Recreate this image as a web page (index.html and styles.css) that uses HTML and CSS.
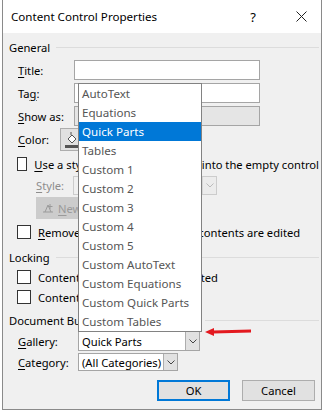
FILE: index.html
```html
<!DOCTYPE html>
<html lang="en">
<head>
    <meta charset="UTF-8">
    <meta name="viewport" content="width=device-width, initial-scale=1.0">
    <title>Content Control Properties</title>
    <link rel="stylesheet" href="styles.css">
</head>
<body>
    <div class="window">
        <div class="titlebar">
            <span class="title">Content Control Properties</span>
            <span class="help">?</span>
            <span class="close">
                <svg width="11" height="11" viewBox="0 0 11 11"><path d="M0.5 0.5 L10.5 10.5 M10.5 0.5 L0.5 10.5" stroke="#222" stroke-width="1" fill="none"/></svg>
            </span>
        </div>

        <div class="content">
            <div class="group-head">General</div>

            <div class="field-row mt-4">
                <label><u>T</u>itle:</label>
                <span class="textbox"></span>
            </div>
            <div class="field-row mt-3">
                <label>Ta<u>g</u>:</label>
                <span class="textbox"></span>
            </div>
            <div class="field-row mt-3">
                <label><u>S</u>how as:</label>
                <span class="combo show-combo"></span>
            </div>
            <div class="field-row color-row mt-2">
                <label><u>C</u>olor:</label>
                <span class="color-btn">
                    <svg width="16" height="18" viewBox="0 0 16 18">
                        <path d="M4 8 L8 4 L12 8 L8 12 Z" fill="#fff" stroke="#555" stroke-width="1"/>
                        <path d="M7 4 L7 1" stroke="#555" stroke-width="1"/>
                        <rect x="1" y="14" width="14" height="3" fill="#555"/>
                    </svg>
                </span>
            </div>

            <div class="check-row mt-5">
                <span class="checkbox"></span>
                <span><u>U</u>se a style to format text typed into the empty control</span>
            </div>
            <div class="field-row style-row mt-4">
                <label class="disabled"><u>S</u>tyle:</label>
                <span class="combo style-combo"><span class="arrow-btn disabled-arrow">
                    <svg width="8" height="5" viewBox="0 0 8 5"><path d="M0.5 0.5 L4 4 L7.5 0.5" stroke="#bbb" fill="none"/></svg>
                </span></span>
            </div>
            <div class="new-row mt-2">
                <span class="new-btn">
                    <svg width="12" height="10" viewBox="0 0 12 10"><path d="M1 9 L11 9 M3 9 L6 2 L9 9 M8 1 L8 6 M5.5 3.5 L10.5 3.5" stroke="#9a9a9a" fill="none"/></svg>
                    <span><u>N</u>ew Style...</span>
                </span>
            </div>
            <div class="check-row mt-5">
                <span class="checkbox"></span>
                <span><u>R</u>emove content control when contents are edited</span>
            </div>

            <div class="group-head mt-8">Locking</div>
            <div class="check-row mt-3">
                <span class="checkbox"></span>
                <span>Content control cannot be <u>d</u>eleted</span>
            </div>
            <div class="check-row mt-4">
                <span class="checkbox"></span>
                <span>Contents cannot be <u>e</u>dited</span>
            </div>

            <div class="group-head mt-6">Document Building Block Properties</div>
            <div class="field-row block-row mt-2">
                <label><u>G</u>allery:</label>
                <span class="combo gallery-combo">
                    <span class="combo-text">Quick Parts</span>
                    <span class="arrow-btn">
                        <svg width="8" height="5" viewBox="0 0 8 5"><path d="M0.5 0.5 L4 4 L7.5 0.5" stroke="#444" fill="none"/></svg>
                    </span>
                </span>
            </div>
            <div class="field-row block-row mt-1">
                <label><u>C</u>ategory:</label>
                <span class="combo category-combo">
                    <span class="combo-text">(All Categories)</span>
                    <span class="arrow-btn">
                        <svg width="8" height="5" viewBox="0 0 8 5"><path d="M0.5 0.5 L4 4 L7.5 0.5" stroke="#444" fill="none"/></svg>
                    </span>
                </span>
            </div>

            <div class="buttons">
                <button class="btn default">OK</button>
                <button class="btn">Cancel</button>
            </div>
        </div>

        <ul class="dropdown">
            <li>AutoText</li>
            <li>Equations</li>
            <li class="selected">Quick Parts</li>
            <li>Tables</li>
            <li>Custom 1</li>
            <li>Custom 2</li>
            <li>Custom 3</li>
            <li>Custom 4</li>
            <li>Custom 5</li>
            <li>Custom AutoText</li>
            <li>Custom Equations</li>
            <li>Custom Quick Parts</li>
            <li>Custom Tables</li>
        </ul>

        <svg class="pointer" width="48" height="10" viewBox="0 0 48 10">
            <path d="M0 5 L9 1 L9 9 Z" fill="#e3191f"/>
            <path d="M8 5 L46 4" stroke="#e3191f" stroke-width="3"/>
        </svg>
    </div>
</body>
</html>
```

FILE: styles.css
```css
* {
    box-sizing: border-box;
}
body {
    margin: 0;
    background: #ffffff;
    font-family: "Noto Sans", "Open Sans", sans-serif;
    font-size: 11.2px;
    color: #000;
}
u {
    text-decoration: underline;
    text-underline-offset: 2px;
}
.window {
    position: relative;
    margin-left: 2px;
    width: 320px;
    height: 410px;
    border: 1px solid #8a8a8a;
    border-top: none;
    background: #f0f0f0;
}
.titlebar {
    height: 33px;
    background: #ffffff;
    display: flex;
    align-items: center;
    padding-left: 8px;
}
.title {
    flex: 1;
    font-size: 11.6px;
}
.help {
    width: 20px;
    margin-right: 25px;
    text-align: center;
    font-size: 13px;
}
.close {
    width: 26px;
    display: flex;
    justify-content: center;
    margin-right: 7px;
}
.content {
    display: flex;
    flex-direction: column;
    padding: 0 2px 0 6px;
    white-space: nowrap;
}
.mt-1 { margin-top: 1px; }
.mt-2 { margin-top: 2px; }
.mt-3 { margin-top: 3px; }
.mt-4 { margin-top: 4px; }
.mt-5 { margin-top: 5px; }
.mt-6 { margin-top: 6px; }
.mt-8 { margin-top: 8px; }

.group-head {
    height: 18px;
    display: flex;
    align-items: center;
}
.group-head:first-child {
    margin-top: 5px;
}
.group-head::after {
    content: "";
    flex: 1;
    margin-left: 6px;
    border-top: 1px solid #dcdcdc;
}
.field-row {
    display: flex;
    align-items: center;
    height: 20px;
    padding-left: 9px;
}
.field-row label {
    width: 56px;
}
.disabled {
    color: #8d8d8d;
}
.textbox {
    width: 186px;
    height: 20px;
    background: #fff;
    border: 1px solid #a5a5a5;
}
.combo {
    display: flex;
    align-items: center;
    height: 20px;
    background: #fff;
    border: 1px solid #a5a5a5;
}
.show-combo {
    width: 186px;
    background: #e5e5e5;
}
.color-row {
    height: 23px;
}
.color-row label {
    width: 42px;
}
.color-btn {
    width: 24px;
    height: 23px;
    display: flex;
    align-items: center;
    justify-content: center;
    background: #e1e1e1;
    border: 1px solid #adadad;
}
.check-row {
    display: flex;
    align-items: center;
    height: 16px;
    padding-left: 8px;
}
.checkbox {
    width: 14px;
    height: 14px;
    margin-right: 7px;
    background: #fff;
    border: 1px solid #333;
}
.style-row {
    height: 19px;
    padding-left: 27px;
}
.style-row label {
    width: 37px;
}
.style-combo {
    width: 144px;
    height: 19px;
    background: #f0f0f0;
    border-color: #cccccc;
    justify-content: flex-end;
}
.arrow-btn {
    width: 14px;
    height: 100%;
    display: flex;
    align-items: center;
    justify-content: center;
    background: #e1e1e1;
    border-left: 1px solid #adadad;
}
.disabled-arrow {
    background: #ececec;
    border-left-color: #d6d6d6;
}
.new-row {
    padding-left: 27px;
    height: 22px;
}
.new-btn {
    display: inline-flex;
    align-items: center;
    gap: 4px;
    height: 22px;
    width: 100px;
    padding-left: 6px;
    color: #9a9a9a;
    background: #cccccc;
}
.block-row label {
    width: 60px;
}
.combo-text {
    flex: 1;
    padding-left: 3px;
}
.gallery-combo {
    width: 122px;
}
.category-combo {
    width: 100px;
    height: 18px;
}
.buttons {
    display: flex;
    justify-content: flex-end;
    gap: 12px;
    margin-top: 8px;
    padding-right: 4px;
}
.btn {
    width: 73px;
    height: 21px;
    font-family: inherit;
    font-size: 11.2px;
    background: #e1e1e1;
    border: 1px solid #adadad;
    padding: 0;
}
.btn.default {
    border: 2px solid #0078d7;
}
.dropdown {
    position: absolute;
    left: 75px;
    top: 83px;
    width: 124px;
    height: 249px;
    margin: 0;
    padding: 0;
    list-style: none;
    background: #fff;
    border: 1px solid #828282;
}
.dropdown li {
    height: 19px;
    line-height: 19px;
    padding-left: 3px;
    font-size: 11.6px;
    color: #555;
    white-space: nowrap;
}
.dropdown li.selected {
    background: #0078d7;
    color: #fff;
}
.pointer {
    position: absolute;
    left: 202px;
    top: 327px;
}
```
